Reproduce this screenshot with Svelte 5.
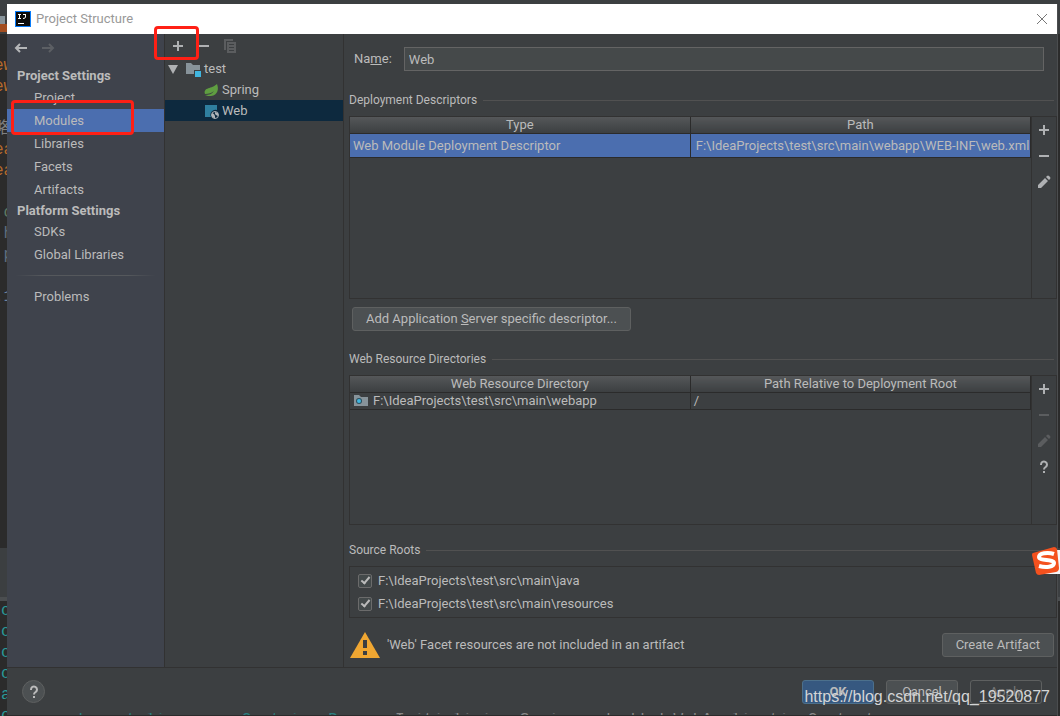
<script lang="ts">
  const projectItems = ['Project', 'Modules', 'Libraries', 'Facets', 'Artifacts'];
  const platformItems = ['SDKs', 'Global Libraries'];

  let section = $state('Modules');
  let facetName = $state('Web');

  let sourceRoots = $state([
    { path: 'F:\\IdeaProjects\\test\\src\\main\\java', checked: true },
    { path: 'F:\\IdeaProjects\\test\\src\\main\\resources', checked: true }
  ]);

  // slices of the editor that stick out to the left of the dialog
  const codeTop = [
    { text: 'ew', color: '#b56a2d' },
    { text: 'ew', color: '#b56a2d' },
    { text: '', color: '' },
    { text: '略', color: '#808080' },
    { text: 'ea', color: '#b56a2d' },
    { text: 'ea', color: '#b56a2d' },
    { text: '', color: '' },
    { text: ' o', color: '#5f7a64' },
    { text: ' h', color: '#5e6f80' },
    { text: ' p', color: '#5e6f80' },
    { text: '', color: '' },
    { text: '.1', color: '#6b84a0' }
  ];
  const codeBottom = ['o', 'o', 'o', 'o', 'a', 'o'];
</script>

{#snippet plus()}
  <svg width="16" height="16" viewBox="0 0 16 16"><path d="M7 3h2v4h4v2H9v4H7V9H3V7h4z" fill="currentColor" /></svg>
{/snippet}

{#snippet minus()}
  <svg width="16" height="16" viewBox="0 0 16 16"><path d="M3 7h10v2H3z" fill="currentColor" /></svg>
{/snippet}

{#snippet pencil()}
  <svg width="16" height="16" viewBox="0 0 16 16">
    <path d="M2 14v-3l7-7 3 3-7 7zM10 3l1-1q1-1 2 0l1 1q1 1 0 2l-1 1z" fill="currentColor" />
  </svg>
{/snippet}

{#snippet question()}
  <svg width="16" height="16" viewBox="0 0 16 16">
    <path d="M5 6V5.500a3 3 0 1 1 4.800 2.400C8.600 8.700 8 9 8 10.500" fill="none" stroke="currentColor" stroke-width="2" />
    <path d="M7 12h2v2H7z" fill="currentColor" />
  </svg>
{/snippet}

<div class="desktop">
  <div class="editor" aria-hidden="true">
    <div class="editor-tabs"><span></span><i></i></div>
    <div class="code">
      {#each codeTop as line}
        <div style:color={line.color}>{line.text}</div>
      {/each}
    </div>
    <div class="editor-panel"></div>
    <div class="code log">
      {#each codeBottom as line}
        <div>{line}</div>
      {/each}
    </div>
  </div>

  <div class="dialog">
    <header class="title-bar">
      <svg width="16" height="16" viewBox="0 0 16 16">
        <rect width="16" height="16" fill="#087cfa" />
        <rect x="1" y="1" width="14" height="14" fill="#0b0b0b" />
        <path d="M3 3.500h3M3 7.500h3M4.500 3v4M8 3.500h3M10.500 3v3q0 1.500-2.500 1.500" fill="none" stroke="#fff" stroke-width="1" />
        <path d="M3 12h6v1H3z" fill="#fff" />
      </svg>
      <span class="title">Project Structure</span>
      <button class="close" aria-label="Close">
        <svg width="12" height="12" viewBox="0 0 12 12"><path d="M1 1l10 10M11 1L1 11" stroke="#777" stroke-width="1" /></svg>
      </button>
    </header>

    <div class="body">
      <nav class="sidebar">
        <div class="history">
          <button aria-label="Back">
            <svg width="16" height="16" viewBox="0 0 16 16"><path d="M14 8H3M7 4L3 8l4 4" fill="none" stroke="#b4b6b8" stroke-width="2" /></svg>
          </button>
          <button aria-label="Forward" disabled>
            <svg width="16" height="16" viewBox="0 0 16 16"><path d="M2 8h11M9 4l4 4-4 4" fill="none" stroke="#5c5f64" stroke-width="2" /></svg>
          </button>
        </div>
        <h2>Project Settings</h2>
        {#each projectItems as item}
          <a href="#{item}" class:active={section === item} onclick={() => (section = item)}>
            {item}
            {#if item === 'Modules'}<span class="mark mark-modules"></span>{/if}
          </a>
        {/each}
        <h2 class="second">Platform Settings</h2>
        {#each platformItems as item}
          <a href="#{item}" class:active={section === item} onclick={() => (section = item)}>{item}</a>
        {/each}
        <hr />
        <a href="#Problems" class:active={section === 'Problems'} onclick={() => (section = 'Problems')}>Problems</a>
      </nav>

      <section class="modules">
        <div class="toolbar">
          <button aria-label="Add">{@render plus()}<span class="mark mark-add"></span></button>
          <button aria-label="Remove">{@render minus()}</button>
          <button aria-label="Copy" disabled>
            <svg width="16" height="16" viewBox="0 0 16 16">
              <path d="M2 1h9v2H4v9H2z" fill="currentColor" />
              <path fill-rule="evenodd" d="M5 4h9v11H5zM7 6v1h5V6zM7 9v1h5V9zM7 12v1h5v-1z" fill="currentColor" />
            </svg>
          </button>
        </div>
        <ul class="tree">
          <li>
            <svg width="16" height="16" viewBox="0 0 16 16"><path d="M2 4h10L7 13z" fill="#afb1b3" /></svg>
            <svg width="16" height="16" viewBox="0 0 16 16">
              <path d="M1 2h5l2 2h7v5H9v4H1z" fill="#87939a" />
              <path d="M10 10h6v6h-6z" fill="#40b6e0" />
            </svg>
            <span>test</span>
          </li>
          <li class="child">
            <svg width="16" height="16" viewBox="0 0 16 16">
              <path d="M14 2c2 5 1 11-6 12-2 0-4 0-6-1 4 0 7-1 9-4-2 2-5 3-9 3C0 5 9 7 14 2z" fill="#5f9e41" />
            </svg>
            <span>Spring</span>
          </li>
          <li class="child selected">
            <svg width="16" height="16" viewBox="0 0 16 16">
              <path d="M2 2h12v5a5 5 0 0 0-6 7H2z" fill="#2f7f9f" />
              <circle cx="12" cy="12" r="3.500" fill="none" stroke="#b0b5b9" stroke-width="1" />
              <path d="M9 10l2 1 1 2v2.500L9 14zM12 9l3 1v3l-2-1-1-1z" fill="#b0b5b9" />
            </svg>
            <span>Web</span>
          </li>
        </ul>
      </section>

      <main class="details">
        <div class="name-row">
          <label for="facet-name">Na<u>m</u>e:</label>
          <input id="facet-name" type="text" bind:value={facetName} />
        </div>

        <h3>Deployment Descriptors</h3>
        <div class="table-panel descriptors">
          <div class="table-wrap">
            <table>
              <thead>
                <tr><th>Type</th><th>Path</th></tr>
              </thead>
              <tbody>
                <tr class="selected">
                  <td>Web Module Deployment Descriptor</td>
                  <td class="path">F:\IdeaProjects\test\src\main\webapp\WEB-INF\web.xml</td>
                </tr>
              </tbody>
            </table>
          </div>
          <div class="side-tools">
            <button aria-label="Add descriptor">{@render plus()}</button>
            <button aria-label="Remove descriptor">{@render minus()}</button>
            <button aria-label="Edit descriptor">{@render pencil()}</button>
          </div>
        </div>
        <button class="btn add-descriptor">Add Application <u>S</u>erver specific descriptor...</button>

        <h3>Web Resource Directories</h3>
        <div class="table-panel resources">
          <div class="table-wrap">
            <table>
              <thead>
                <tr><th>Web Resource Directory</th><th>Path Relative to Deployment Root</th></tr>
              </thead>
              <tbody>
                <tr>
                  <td>
                    <span class="dir">
                      <svg width="16" height="16" viewBox="0 0 16 16">
                        <path d="M1 2h5l2 2h7v9H1z" fill="#87939a" />
                        <circle cx="6" cy="8" r="3" fill="#2b4f5e" />
                        <circle cx="6" cy="8" r="2" fill="#40b6e0" />
                      </svg>
                      F:\IdeaProjects\test\src\main\webapp
                    </span>
                  </td>
                  <td>/</td>
                </tr>
              </tbody>
            </table>
          </div>
          <div class="side-tools">
            <button aria-label="Add directory">{@render plus()}</button>
            <button aria-label="Remove directory" disabled>{@render minus()}</button>
            <button aria-label="Edit directory" disabled>{@render pencil()}</button>
            <button aria-label="Directory help">{@render question()}</button>
          </div>
        </div>

        <h3>Source Roots</h3>
        <div class="roots">
          {#each sourceRoots as root}
            <label><input type="checkbox" bind:checked={root.checked} />{root.path}</label>
          {/each}
        </div>

        <div class="warning">
          <svg width="30" height="26" viewBox="0 0 30 26">
            <path d="M15 0l15 26H0z" fill="#f0a732" />
            <path d="M13 8h4v8h-4zM13 19h4v4h-4z" fill="#3c3f41" />
          </svg>
          <span>'Web' Facet resources are not included in an artifact</span>
          <button class="btn">Create Arti<u>f</u>act</button>
        </div>
      </main>
    </div>

    <footer>
      <button class="help" aria-label="Help">{@render question()}</button>
      <button class="btn ok">OK</button>
      <button class="btn">Cancel</button>
      <button class="btn" disabled>Apply</button>
    </footer>
    <div class="log-line" aria-hidden="true">
      <span>o.apache.catalina.core.ContainerBase</span>
      <b>Initializing Spring embedded WebApplicationContext</b>
    </div>
  </div>

  <svg class="ime" width="28" height="28" viewBox="0 0 28 28" aria-hidden="true">
    <path d="M14 3h14v24H8z" fill="#f4f6f8" />
    <path d="M1 6Q0 6 0 8l4 18q1 2 3 2l17-3q3-1 3-4L25 2q-1-2-3-2z" fill="#f4511e" />
    <path d="M22 7c-6-2-15-1-15 3 0 4 15 2 15 6 0 4-8 5-15 3" fill="none" stroke="#fff" stroke-width="4" />
  </svg>
  <div class="watermark">https://blog.csdn.net/qq_19520877</div>
</div>

<style>
  :global(body) {
    margin: 0;
    background: #2b2b2b;
  }

  .desktop {
    position: relative;
    display: flex;
    box-sizing: border-box;
    min-height: 100vh;
    padding: 4px 2px 0 7px;
    overflow: hidden;
    font-family: Roboto, 'Noto Sans', sans-serif;
    font-size: 13px;
    line-height: 18px;
    color: #bbbbbb;
  }

  button {
    padding: 0;
    border: none;
    background: none;
    font: inherit;
    color: inherit;
  }

  svg {
    display: block;
    flex: none;
  }

  .editor {
    position: absolute;
    inset: 0;
    background: #2b2b2b;
  }

  .editor-tabs {
    height: 34px;
    padding-top: 16px;
    box-sizing: border-box;
    margin-bottom: 22px;
    background: #3c3f41;
  }

  .editor-tabs span {
    display: block;
    width: 5px;
    height: 8px;
    background: #87939a;
  }

  .editor-tabs i {
    display: block;
    width: 7px;
    height: 8px;
    background: #a34e20;
  }

  .code {
    height: 492px;
    font-family: 'Liberation Mono', 'Noto Sans CJK SC', monospace;
    font-size: 16px;
    line-height: 21px;
    white-space: pre;
  }

  .code div {
    height: 21px;
    margin-left: -6px;
  }

  .editor-panel {
    height: 53px;
    border-bottom: 4px solid #4b4e50;
    box-sizing: border-box;
    background: #3c3f41;
  }

  .log {
    height: auto;
    color: #299999;
  }

  .log div {
    margin-left: 1px;
  }

  .dialog {
    position: relative;
    flex: 1;
    min-width: 0;
    display: flex;
    flex-direction: column;
    background: #3c3f41;
    border-right: 1px solid #4b4d4f;
  }

  .title-bar {
    display: flex;
    align-items: center;
    gap: 5px;
    height: 30px;
    padding: 0 9px 0 8px;
    background: #fff;
    color: #999;
  }

  .title {
    flex: 1;
  }

  .body {
    flex: 1;
    display: flex;
    border-bottom: 1px solid #323232;
  }

  .sidebar {
    width: 157px;
    background: #3f434c;
    border-right: 1px solid #323232;
  }

  .history {
    display: flex;
    align-items: flex-start;
    gap: 11px;
    padding: 6px 6px 0;
    height: 26px;
  }

  .sidebar h2 {
    margin: 0;
    padding-left: 10px;
    font-size: 13px;
    line-height: 20px;
  }

  .sidebar .second {
    line-height: 19px;
  }

  .sidebar a {
    position: relative;
    display: block;
    padding-left: 27px;
    line-height: 23px;
    color: #bbbbbb;
    text-decoration: none;
  }

  .sidebar a.active {
    background: #4b6eaf;
  }

  .sidebar hr {
    height: 1px;
    margin: 9px 8px;
    border: none;
    background: linear-gradient(to right, transparent, #55585c 20%, #55585c 80%, transparent);
  }

  /* red callouts, drawn over the neighbouring panels */
  .mark {
    position: absolute;
    z-index: 2;
    border: 3px solid #ff2015;
    border-radius: 4px;
    pointer-events: none;
  }

  .mark-modules {
    inset: -9px 30px -3px 4px;
  }

  .mark-add {
    inset: -12px -13px -6px -16px;
  }

  .modules {
    width: 178px;
    border-right: 1px solid #323232;
  }

  .toolbar {
    display: flex;
    gap: 10px;
    height: 20px;
    padding: 4px 5px 0;
  }

  .toolbar button,
  .side-tools button {
    position: relative;
    height: 16px;
    color: #afb1b3;
  }

  .toolbar button:disabled,
  .side-tools button:disabled {
    color: #5b5d5f;
  }

  .tree {
    margin: 0;
    padding: 0;
    list-style: none;
  }

  .tree li {
    display: flex;
    align-items: center;
    gap: 3px;
    height: 21px;
    padding-left: 1px;
  }

  .tree li.child {
    padding-left: 38px;
  }

  .tree .selected {
    background: #0d293e;
  }

  .details {
    flex: 1;
    min-width: 0;
    padding-left: 5px;
  }

  .name-row {
    display: flex;
    align-items: center;
    gap: 12px;
    padding: 13px 13px 19px 5px;
  }

  .name-row input {
    flex: 1;
    min-width: 0;
    height: 24px;
    box-sizing: border-box;
    padding: 0 4px;
    border: 1px solid #646464;
    background: #45494a;
    color: #bbbbbb;
    font: inherit;
  }

  h3 {
    display: flex;
    align-items: center;
    gap: 6px;
    margin: 0;
    padding-right: 3px;
    font-size: 12px;
    font-weight: normal;
    line-height: 20px;
  }

  h3::after {
    content: '';
    flex: 1;
    height: 1px;
    background: #515151;
  }

  .table-panel {
    display: flex;
    margin: 6px 0 8px;
    border: 1px solid #323232;
  }

  .descriptors {
    height: 181px;
  }

  .resources {
    height: 148px;
    margin-bottom: 15px;
  }

  .table-wrap {
    flex: 1;
    min-width: 0;
  }

  table {
    width: 100%;
    table-layout: fixed;
    border-collapse: collapse;
  }

  th {
    height: 16px;
    padding: 0;
    border-right: 1px solid #2b2b2b;
    border-bottom: 1px solid #2b2b2b;
    background: linear-gradient(#555759, #3c3f41);
    font-weight: normal;
    line-height: 16px;
  }

  td {
    height: 16px;
    padding: 0 3px;
    border-right: 1px solid #2b2b2b;
    border-bottom: 1px solid #2b2b2b;
    line-height: 16px;
    white-space: nowrap;
    overflow: hidden;
  }

  tr.selected td {
    height: 23px;
    background: #4b6eaf;
  }

  td.path {
    padding: 0 0 0 5px;
  }

  .dir {
    display: flex;
    align-items: center;
    gap: 4px;
  }

  .side-tools {
    display: flex;
    flex-direction: column;
    gap: 10px;
    width: 24px;
    padding-top: 5px;
    align-items: center;
    border-left: 1px solid #323232;
  }

  .btn {
    height: 24px;
    padding: 0 13px;
    box-sizing: border-box;
    border: 1px solid #5e6060;
    border-radius: 3px;
    background: #4c5052;
    line-height: 22px;
  }

  .add-descriptor {
    display: block;
    margin: 0 0 18px 3px;
  }

  .roots {
    display: flex;
    flex-direction: column;
    gap: 5px;
    margin-top: 6px;
    padding: 5px 8px 4px;
    border: 1px solid #323232;
  }

  .roots label {
    display: flex;
    align-items: center;
    gap: 6px;
  }

  .roots input {
    appearance: none;
    width: 14px;
    height: 14px;
    margin: 0;
    border: 1px solid #6b6b6b;
    border-radius: 2px;
    background: #43494a;
  }

  .roots input:checked::after {
    content: '';
    display: block;
    width: 3px;
    height: 7px;
    margin: 0 auto;
    border: solid #bbbbbb;
    border-width: 0 2px 2px 0;
    transform: rotate(40deg);
  }

  .warning {
    display: flex;
    align-items: center;
    gap: 7px;
    padding: 14px 3px 8px 1px;
  }

  .warning span {
    flex: 1;
  }

  footer {
    display: flex;
    align-items: center;
    gap: 12px;
    height: 47px;
    padding: 0 15px 1px;
  }

  footer .btn {
    width: 72px;
    padding: 0;
  }

  footer .ok {
    border-color: #4c708c;
    background: #365880;
    font-weight: bold;
  }

  footer .btn:disabled {
    background: none;
    color: #777;
  }

  .help {
    display: flex;
    align-items: center;
    justify-content: center;
    width: 23px;
    height: 23px;
    box-sizing: border-box;
    margin-right: auto;
    border: 1px solid #5e6060;
    border-radius: 50%;
    background: #4c5052;
  }

  .log-line {
    position: absolute;
    left: 0;
    right: 0;
    bottom: 0;
    display: flex;
    height: 2px;
    padding-left: 14px;
    border-bottom: 1px solid #2b2b2b;
    overflow: hidden;
    font: 16px/14px 'Liberation Mono', monospace;
    color: #888;
    white-space: pre;
  }

  .log-line span {
    width: 374px;
    color: #2b7f80;
  }

  .log-line b {
    font-weight: normal;
  }

  .ime {
    position: absolute;
    right: 0;
    top: 547px;
  }

  .watermark {
    position: absolute;
    right: 10px;
    bottom: 9px;
    font: 16px/20px 'Liberation Sans', sans-serif;
    color: #d4d5d6;
    pointer-events: none;
  }
</style>
